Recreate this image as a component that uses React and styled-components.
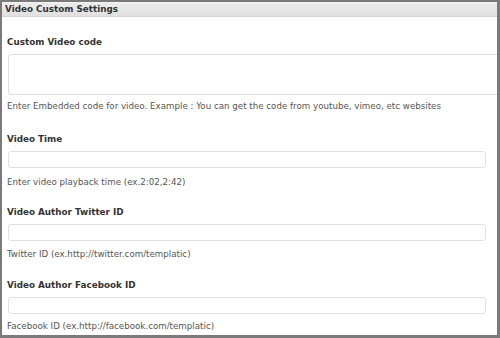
import React from 'react'
import styled, { createGlobalStyle } from 'styled-components'

const GlobalStyle = createGlobalStyle`
  html, body {
    margin: 0;
    padding: 0;
    background: #ffffff;
  }
`

const Frame = styled.div`
  width: 500px;
  height: 338px;
  box-sizing: border-box;
  border-style: solid;
  border-color: #7a7a7a;
  border-width: 2px 3px 3px 2px;
  background: #ffffff;
  overflow: hidden;
  font-family: "DejaVu Sans", Verdana, sans-serif;
`

const Header = styled.div`
  height: 15px;
  box-sizing: border-box;
  padding: 0 0 0 3px;
  background: linear-gradient(#ececec, #e0e0e0);
  border-top: 1px solid #f4f4f4;
  border-bottom: 1px solid #d6d6d6;
  font-size: 8.8px;
  font-weight: bold;
  color: #333333;
  line-height: 12px;
`

const Body = styled.div`
  padding: 19px 0 0 5px;
`

const Field = styled.div`
  display: flex;
  flex-direction: column;
  margin-bottom: ${props => props.gap}px;
`

const Label = styled.div`
  font-size: 8.8px;
  font-weight: bold;
  color: #333333;
  line-height: 12px;
  margin-bottom: 6px;
`

const Area = styled.div`
  height: 41px;
  box-sizing: border-box;
  margin-left: 1px;
  margin-right: -4px;
  border: 1px solid #dedede;
  border-radius: 3px 0 0 3px;
  background: #ffffff;
`

const Input = styled.div`
  width: 478px;
  height: 17px;
  box-sizing: border-box;
  margin-left: 1px;
  border: 1px solid #e0e0e0;
  border-radius: 3px;
  background: #ffffff;
`

const Hint = styled.div`
  font-size: 8.7px;
  color: #555555;
  line-height: 12px;
  margin-top: ${props => props.top}px;
`

const fields = [
  { label: 'Custom Video code', hint: 'Enter Embedded code for video. Example : You can get the code from youtube, vimeo, etc websites', area: true, top: 5, gap: 21 },
  { label: 'Video Time', hint: 'Enter video playback time (ex.2:02,2:42)', top: 8, gap: 18 },
  { label: 'Video Author Twitter ID', hint: 'Twitter ID (ex.http://twitter.com/templatic)', top: 7, gap: 19 },
  { label: 'Video Author Facebook ID', hint: 'Facebook ID (ex.http://facebook.com/templatic)', top: 6, gap: 0 },
]

export default function App() {
  return (
    <>
      <GlobalStyle />
      <Frame>
        <Header>Video Custom Settings</Header>
        <Body>
          {fields.map(f => (
            <Field key={f.label} gap={f.gap}>
              <Label>{f.label}</Label>
              {f.area ? <Area /> : <Input />}
              <Hint top={f.top}>{f.hint}</Hint>
            </Field>
          ))}
        </Body>
      </Frame>
    </>
  )
}
